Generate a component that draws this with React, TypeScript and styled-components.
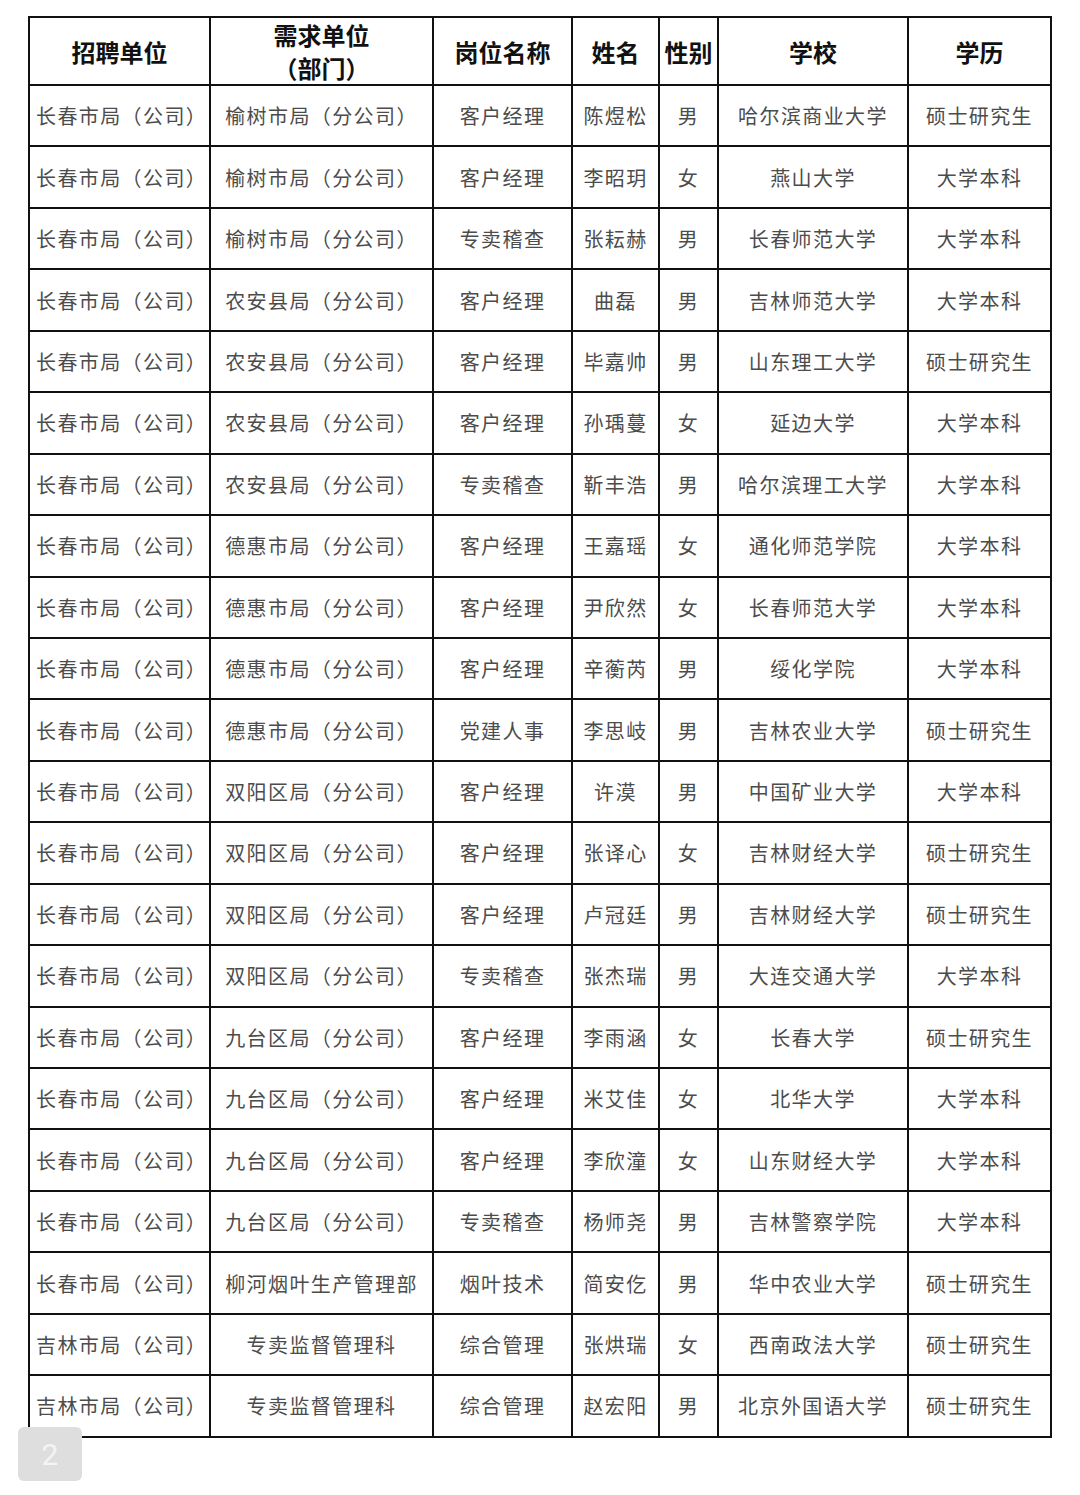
import styled, { createGlobalStyle } from "styled-components";

const GlobalStyle = createGlobalStyle`
  html, body {
    margin: 0;
    padding: 0;
    background: #ffffff;
  }
  body {
    font-family: "Noto Sans CJK SC", "Noto Sans", sans-serif;
  }
`;

const Page = styled.div`
  position: relative;
  width: 1080px;
  height: 1495px;
  padding: 16px 0 0 28px;
  box-sizing: border-box;
  background: #ffffff;
`;

const Table = styled.table`
  border-collapse: collapse;
  table-layout: fixed;
`;

const HeadCell = styled.th<{ $w: number }>`
  width: ${(p) => p.$w - 2}px;
  height: 66px;
  border: 2px solid #111;
  padding: 0;
  font-size: 24px;
  font-weight: 700;
  color: #111;
  line-height: 33px;
  text-align: center;
  white-space: nowrap;
`;

const Cell = styled.td<{ $left?: boolean }>`
  height: 59.45px;
  border: 2px solid #111;
  padding: ${(p) => (p.$left ? "0 0 0 6px" : "0")};
  font-size: 20px;
  font-weight: 400;
  color: #4c4c4c;
  letter-spacing: 1.4px;
  text-align: ${(p) => (p.$left ? "left" : "center")};
  white-space: nowrap;
`;

const PageBadge = styled.div`
  position: absolute;
  left: 18px;
  top: 1427px;
  width: 64px;
  height: 54px;
  border-radius: 6px;
  background: #dedede;
  color: #f4f4f4;
  font-family: "Roboto", "Noto Sans", sans-serif;
  font-size: 30px;
  display: flex;
  align-items: center;
  justify-content: center;
`;

const columns: { label: React.ReactNode; w: number }[] = [
  { label: "招聘单位", w: 181 },
  {
    label: (
      <>
        需求单位
        <br />
        （部门）
      </>
    ),
    w: 223,
  },
  { label: "岗位名称", w: 139 },
  { label: "姓名", w: 87 },
  { label: "性别", w: 59 },
  { label: "学校", w: 190 },
  { label: "学历", w: 143 },
];

const rows = [
  ["长春市局（公司）", "榆树市局（分公司）", "客户经理", "陈煜松", "男", "哈尔滨商业大学", "硕士研究生"],
  ["长春市局（公司）", "榆树市局（分公司）", "客户经理", "李昭玥", "女", "燕山大学", "大学本科"],
  ["长春市局（公司）", "榆树市局（分公司）", "专卖稽查", "张耘赫", "男", "长春师范大学", "大学本科"],
  ["长春市局（公司）", "农安县局（分公司）", "客户经理", "曲磊", "男", "吉林师范大学", "大学本科"],
  ["长春市局（公司）", "农安县局（分公司）", "客户经理", "毕嘉帅", "男", "山东理工大学", "硕士研究生"],
  ["长春市局（公司）", "农安县局（分公司）", "客户经理", "孙瑀蔓", "女", "延边大学", "大学本科"],
  ["长春市局（公司）", "农安县局（分公司）", "专卖稽查", "靳丰浩", "男", "哈尔滨理工大学", "大学本科"],
  ["长春市局（公司）", "德惠市局（分公司）", "客户经理", "王嘉瑶", "女", "通化师范学院", "大学本科"],
  ["长春市局（公司）", "德惠市局（分公司）", "客户经理", "尹欣然", "女", "长春师范大学", "大学本科"],
  ["长春市局（公司）", "德惠市局（分公司）", "客户经理", "辛蘅芮", "男", "绥化学院", "大学本科"],
  ["长春市局（公司）", "德惠市局（分公司）", "党建人事", "李思岐", "男", "吉林农业大学", "硕士研究生"],
  ["长春市局（公司）", "双阳区局（分公司）", "客户经理", "许漠", "男", "中国矿业大学", "大学本科"],
  ["长春市局（公司）", "双阳区局（分公司）", "客户经理", "张译心", "女", "吉林财经大学", "硕士研究生"],
  ["长春市局（公司）", "双阳区局（分公司）", "客户经理", "卢冠廷", "男", "吉林财经大学", "硕士研究生"],
  ["长春市局（公司）", "双阳区局（分公司）", "专卖稽查", "张杰瑞", "男", "大连交通大学", "大学本科"],
  ["长春市局（公司）", "九台区局（分公司）", "客户经理", "李雨涵", "女", "长春大学", "硕士研究生"],
  ["长春市局（公司）", "九台区局（分公司）", "客户经理", "米艾佳", "女", "北华大学", "大学本科"],
  ["长春市局（公司）", "九台区局（分公司）", "客户经理", "李欣潼", "女", "山东财经大学", "大学本科"],
  ["长春市局（公司）", "九台区局（分公司）", "专卖稽查", "杨师尧", "男", "吉林警察学院", "大学本科"],
  ["长春市局（公司）", "柳河烟叶生产管理部", "烟叶技术", "简安仡", "男", "华中农业大学", "硕士研究生"],
  ["吉林市局（公司）", "专卖监督管理科", "综合管理", "张烘瑞", "女", "西南政法大学", "硕士研究生"],
  ["吉林市局（公司）", "专卖监督管理科", "综合管理", "赵宏阳", "男", "北京外国语大学", "硕士研究生"],
];

const App = () => {
  return (
    <Page>
      <GlobalStyle />
      <Table>
        <thead>
          <tr>
            {columns.map((c, i) => (
              <HeadCell key={i} $w={c.w}>
                {c.label}
              </HeadCell>
            ))}
          </tr>
        </thead>
        <tbody>
          {rows.map((row, r) => (
            <tr key={r}>
              {row.map((v, i) => (
                <Cell key={i} $left={i === 0}>
                  {v}
                </Cell>
              ))}
            </tr>
          ))}
        </tbody>
      </Table>
      <PageBadge>2</PageBadge>
    </Page>
  );
};

export default App;
